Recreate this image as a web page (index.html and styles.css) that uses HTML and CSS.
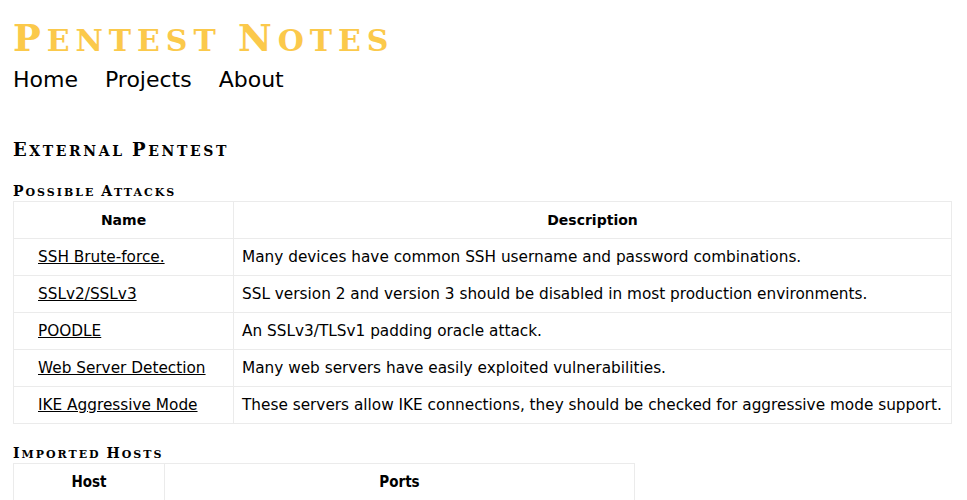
FILE: index.html
```html
<!DOCTYPE html>
<html>
<head>
<meta charset="utf-8">
<title>Pentest Notes</title>
<link rel="stylesheet" href="styles.css">
</head>
<body>
<header class="site-header">
  <h1 class="site-title"><span class="cap">P</span>entest <span class="cap">N</span>otes</h1>
  <nav class="nav">
    <a href="#">Home</a>
    <a href="#">Projects</a>
    <a href="#">About</a>
  </nav>
</header>
<main class="content">
  <h2 class="section-title"><span class="cap">E</span>xternal <span class="cap">P</span>entest</h2>
  <h3 class="sub-title"><span class="cap">P</span>ossible <span class="cap">A</span>ttacks</h3>
  <table class="grid attacks">
    <thead>
      <tr><th class="col-name">Name</th><th>Description</th></tr>
    </thead>
    <tbody>
      <tr><td class="name"><a href="#">SSH Brute-force.</a></td><td>Many devices have common SSH username and password combinations.</td></tr>
      <tr><td class="name"><a href="#">SSLv2/SSLv3</a></td><td>SSL version 2 and version 3 should be disabled in most production environments.</td></tr>
      <tr><td class="name"><a href="#">POODLE</a></td><td>An SSLv3/TLSv1 padding oracle attack.</td></tr>
      <tr><td class="name"><a href="#">Web Server Detection</a></td><td>Many web servers have easily exploited vulnerabilities.</td></tr>
      <tr><td class="name"><a href="#">IKE Aggressive Mode</a></td><td>These servers allow IKE connections, they should be checked for aggressive mode support.</td></tr>
    </tbody>
  </table>
  <h3 class="sub-title hosts-title"><span class="cap">I</span>mported <span class="cap">H</span>osts</h3>
  <table class="grid hosts">
    <thead>
      <tr><th class="col-host">Host</th><th>Ports</th></tr>
    </thead>
  </table>
</main>
</body>
</html>
```

FILE: styles.css
```css
html, body {
  margin: 0;
  padding: 0;
  background: #ffffff;
}

body {
  padding: 0 13px;
  color: #000;
  font-family: "DejaVu Sans", sans-serif;
}

.site-title,
.section-title,
.sub-title {
  margin: 0;
  font-family: "DejaVu Serif", serif;
  font-weight: bold;
  text-transform: uppercase;
}

.site-title {
  padding-top: 16px;
  font-size: 30px;
  line-height: 44px;
  letter-spacing: 5.9px;
  color: #fbc94b;
}

.site-title .cap {
  font-size: 37px;
}

.nav {
  display: flex;
  gap: 27px;
  margin-top: 2px;
}

.nav a {
  font-size: 22px;
  line-height: 30px;
  color: #000;
  text-decoration: none;
}

.content {
  margin-top: 43px;
}

.section-title {
  font-size: 14px;
  line-height: 24px;
  letter-spacing: 2.6px;
}

.section-title .cap {
  font-size: 18px;
}

.sub-title {
  margin-top: 20px;
  margin-bottom: 0;
  font-size: 11px;
  line-height: 16px;
  letter-spacing: 2px;
}

.sub-title .cap {
  font-size: 14px;
}

.hosts-title {
  margin-top: 21px;
}

.grid {
  border-collapse: collapse;
  table-layout: fixed;
  font-size: 15.3px;
}

.grid th,
.grid td {
  box-sizing: border-box;
  border: 1px solid #ebebeb;
  padding: 8px;
  line-height: 20px;
  text-align: left;
  white-space: nowrap;
}

.grid th {
  text-align: center;
  font-weight: bold;
  font-size: 14px;
}

.attacks {
  width: 939px;
}

.attacks .col-name {
  width: 220px;
}

.attacks td.name {
  padding-left: 24px;
}

.grid a {
  color: #000;
  text-decoration: underline;
}

.hosts {
  width: 622px;
}

.hosts th {
  font-family: "DejaVu Sans Condensed", "DejaVu Sans", sans-serif;
  font-size: 15px;
}

.hosts .col-host {
  width: 151px;
}
```
